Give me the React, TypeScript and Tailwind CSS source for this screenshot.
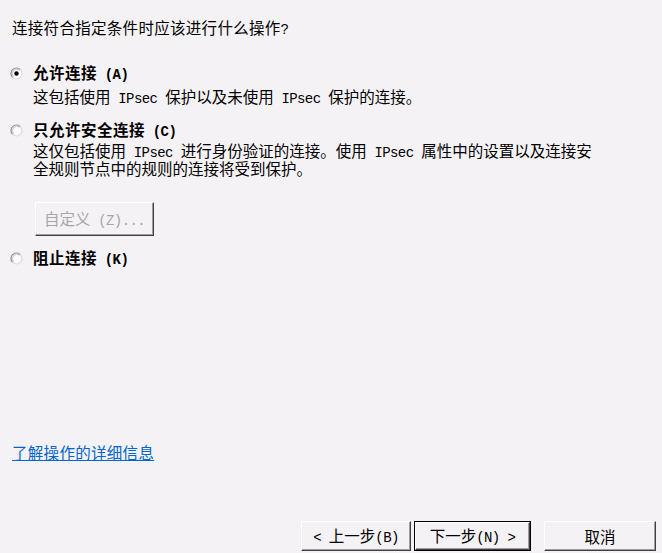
function Radio({ checked }: { checked?: boolean }) {
  return (
    <svg width="13" height="13" viewBox="0 0 13 13" className="shrink-0">
      <circle cx="6.5" cy="6.5" r="5.5" fill="#ffffff" />
      <path d="M2.6 10.4 A5.5 5.5 0 0 1 10.4 2.6" fill="none" stroke="#8c898c" strokeWidth="1.2" />
      <path d="M10.4 2.6 A5.5 5.5 0 0 1 2.6 10.4" fill="none" stroke="#dcd9dc" strokeWidth="1.2" />
      <path d="M3.4 9.6 A4.4 4.4 0 0 1 9.6 3.4" fill="none" stroke="#c4c1c4" strokeWidth="1" />
      {checked && <circle cx="6.5" cy="6.5" r="2.2" fill="#000000" />}
    </svg>
  );
}

// half-width latin runs, SimSun style
function M({ children }: { children: React.ReactNode }) {
  return (
    <span
      className="whitespace-pre text-[14px] leading-none tracking-[-0.6px]"
      style={{ fontFamily: '"Liberation Mono", monospace' }}
    >
      {children}
    </span>
  );
}

function Button({
  children,
  width,
  isDefault,
}: {
  children: React.ReactNode;
  width: string;
  isDefault?: boolean;
}) {
  const inner = (
    <div className="flex h-full items-center justify-center border border-t-white border-l-white border-r-[#404040] border-b-[#404040] bg-[#f5f2f5] leading-4 text-black shadow-[inset_-1px_-1px_0_#a09da0]">
      <span className="leading-4">{children}</span>
    </div>
  );
  if (isDefault) {
    return <div className={`${width} h-[30px] border border-black`}>{inner}</div>;
  }
  return <div className={`${width} h-[30px]`}>{inner}</div>;
}

export default function App() {
  return (
    <div
      className="flex h-[553px] w-[662px] flex-col overflow-hidden bg-[#f5f2f5] text-[15.5px] text-black"
      style={{ fontFamily: '"Noto Sans CJK SC", "Noto Sans", sans-serif' }}
    >
      <p className="ml-3 mt-[19px] h-4 leading-4 tracking-[0.3px]">
        连接符合指定条件时应该进行什么操作<M>?</M>
      </p>

      <div className="ml-[10px] mt-[30px] flex h-4 items-center gap-[10px] leading-4">
        <Radio checked />
        <span className="font-bold tracking-[0.5px]">
          允许连接<M> (A)</M>
        </span>
      </div>
      <p className="ml-[33px] mt-[7px] h-4 leading-4">
        这包括使用<M> IPsec </M>保护以及未使用<M> IPsec </M>保护的连接。
      </p>

      <div className="ml-[10px] mt-[18px] flex h-4 items-center gap-[10px] leading-4">
        <Radio />
        <span className="font-bold tracking-[0.5px]">
          只允许安全连接<M> (C)</M>
        </span>
      </div>
      <p className="ml-[33px] mt-[4px] h-[32px] leading-[16px]">
        这仅包括使用<M> IPsec </M>进行身份验证的连接。使用<M> IPsec </M>属性中的设置以及连接安
        <br />
        全规则节点中的规则的连接将受到保护。
      </p>

      <div className="ml-[35px] mt-[28px] h-[34px] w-[119px]">
        <div className="flex h-full items-center justify-center border border-t-white border-l-white border-r-[#404040] border-b-[#404040] leading-4 text-[#a8a5a8] shadow-[inset_-1px_-1px_0_#a09da0]">
          <span className="leading-4">
            自定义<M> (Z)...</M>
          </span>
        </div>
      </div>

      <div className="ml-[10px] mt-[14px] flex h-4 items-center gap-[10px] leading-4">
        <Radio />
        <span className="font-bold tracking-[0.5px]">
          阻止连接<M> (K)</M>
        </span>
      </div>

      <a className="ml-3 mt-[178px] h-4 self-start leading-4 tracking-[0.3px] text-[#0066cc] underline">
        了解操作的详细信息
      </a>

      <div className="mt-[61px] flex justify-end pr-[6px]">
        <Button width="w-[110px]">
          <M>&lt; </M>上一步<M>(B)</M>
        </Button>
        <div className="ml-[3px]">
          <Button width="w-[117px]" isDefault>
            下一步<M>(N) &gt;</M>
          </Button>
        </div>
        <div className="ml-[13px]">
          <Button width="w-[112px]">取消</Button>
        </div>
      </div>
    </div>
  );
}
